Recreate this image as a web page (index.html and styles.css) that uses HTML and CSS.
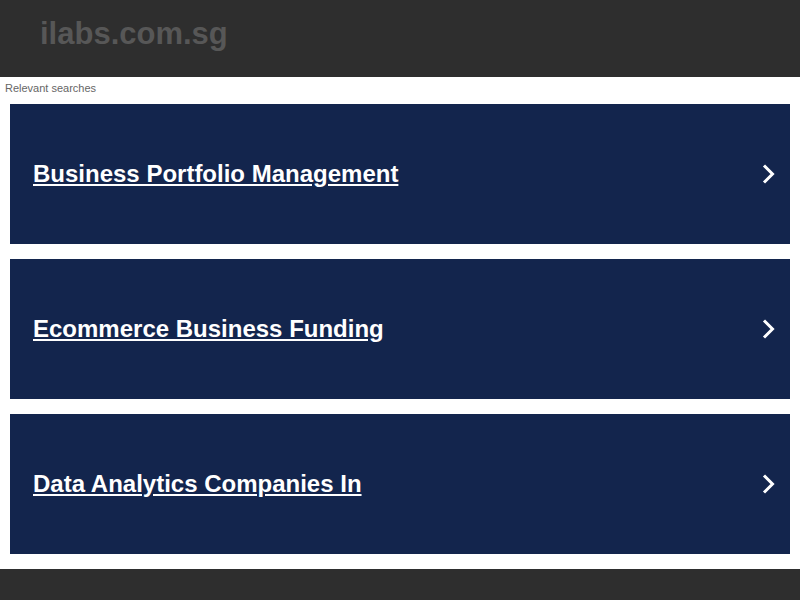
FILE: index.html
```html
<!DOCTYPE html>
<html>
<head>
<meta charset="utf-8">
<link rel="stylesheet" href="styles.css">
</head>
<body>
<header class="header"><div class="domain">ilabs.com.sg</div></header>
<div class="relevant">Relevant searches</div>
<main class="list">
  <a class="card" href="#"><span class="label">Business Portfolio Management</span>
    <svg class="chev" width="16" height="22" viewBox="0 0 16 22"><path d="M3 2.5 L11.5 11 L3 19.5" fill="none" stroke="#fff" stroke-width="3"/></svg></a>
  <a class="card" href="#"><span class="label">Ecommerce Business Funding</span>
    <svg class="chev" width="16" height="22" viewBox="0 0 16 22"><path d="M3 2.5 L11.5 11 L3 19.5" fill="none" stroke="#fff" stroke-width="3"/></svg></a>
  <a class="card" href="#"><span class="label">Data Analytics Companies In</span>
    <svg class="chev" width="16" height="22" viewBox="0 0 16 22"><path d="M3 2.5 L11.5 11 L3 19.5" fill="none" stroke="#fff" stroke-width="3"/></svg></a>
</main>
<footer class="footer"></footer>
</body>
</html>
```
FILE: styles.css
```css
html, body { margin: 0; padding: 0; background: #fff; font-family: "Liberation Sans", Arial, sans-serif; }
.header { height: 77px; background: #2e2e2e; box-sizing: border-box; padding: 16px 0 0 40px; }
.domain { color: #575757; font-weight: bold; font-size: 31px; line-height: 36px; }
.relevant { font-size: 11px; color: #666; padding: 5px 5px 0 5px; height: 22px; box-sizing: border-box; line-height: 12px; }
.list { display: flex; flex-direction: column; gap: 15px; padding: 5px 10px 15px; }
.card { height: 140px; background: #13254d; display: flex; align-items: center; justify-content: space-between; padding: 0 13px 0 23px; color: #fff; text-decoration: none; }
.label { font-size: 24px; font-weight: bold; text-decoration: underline; color: #fff; }
.chev { display: block; }
.footer { height: 31px; background: #2e2e2e; }
```
